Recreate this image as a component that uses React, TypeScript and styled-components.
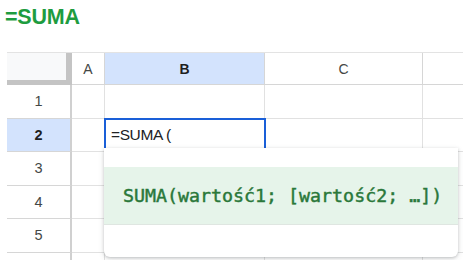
import styled, { createGlobalStyle } from 'styled-components'

const GlobalStyle = createGlobalStyle`
    body {
        margin: 0;
        background: #ffffff;
        font-family: Arial, "Liberation Sans", sans-serif;
        overflow: hidden;
    }
`

const Page = styled.div`
    position: relative;
    width: 463px;
    height: 260px;
    overflow: hidden;
`

const Title = styled.div`
    padding: 5px 0 0 5px;
    height: 52px;
    box-sizing: border-box;
    font-family: "Liberation Sans", Arial, sans-serif;
    font-weight: 700;
    font-size: 21.5px;
    color: #1e9c3f;
    letter-spacing: -0.2px;
`

const Sheet = styled.div`
    display: grid;
    grid-template-columns: 65px 33px 160px 158px 60px;
    grid-template-rows: 32px repeat(6, 33.5px);
    margin-left: 7px;
    border-top: 1px solid #e3e3e3;
`

type cellType = {
    active?: boolean;
    selected?: boolean;
}

const Cell = styled.div<cellType>`
    box-sizing: border-box;
    border-right: 1px solid #e1e1e1;
    border-bottom: 1px solid #e1e1e1;
    background: #ffffff;
    font-size: 15.5px;
    color: #202124;
    display: flex;
    align-items: center;
    padding-left: 6px;
    outline: ${(p) => (p.selected ? '2px solid #1a5fd8' : 'none')};
    outline-offset: -1px;
    position: relative;
    z-index: ${(p) => (p.selected ? 1 : 0)};
    letter-spacing: -0.4px;
`

const HeadCell = styled.div<cellType>`
    box-sizing: border-box;
    display: flex;
    align-items: center;
    justify-content: center;
    font-family: "Liberation Sans", Arial, sans-serif;
    font-size: 14px;
    font-weight: ${(p) => (p.active ? 700 : 400)};
    color: ${(p) => (p.active ? '#1f1f1f' : '#444746')};
    background: ${(p) => (p.active ? '#d3e3fd' : '#ffffff')};
    border-right: 1px solid #d6d6d6;
    border-bottom: 1px solid #d6d6d6;
`

const Corner = styled.div`
    box-sizing: border-box;
    background: #f8f9fa;
    border-right: 6px solid #c4c4c4;
    border-bottom: 5px solid #c4c4c4;
`

const RowHead = styled(HeadCell)`
    border-right: 2px solid #d0d0d0;
    font-size: 14.5px;
`

const Popup = styled.div`
    position: absolute;
    left: 104px;
    top: 148px;
    width: 354px;
    height: 109px;
    background: #ffffff;
    border-radius: 0 0 6px 6px;
    box-shadow: 0 1px 3px rgba(60, 64, 67, 0.25), 0 2px 6px rgba(60, 64, 67, 0.12);
    z-index: 5;
    padding-top: 19px;
    box-sizing: border-box;
`

const Signature = styled.div`
    height: 57px;
    background: #e6f4ea;
    border-bottom: 1px solid #dfe6e1;
    display: flex;
    align-items: center;
    padding-left: 19px;
    font-family: "DejaVu Sans Mono", "Liberation Mono", monospace;
    font-size: 18.3px;
    color: #2a783a;
    -webkit-text-stroke: 0.45px #2a783a;
    white-space: nowrap;
`

const columns = ['A', 'B', 'C', '']
const rows = [1, 2, 3, 4, 5, 6]

const App = () => {
    return (
        <Page>
            <GlobalStyle />
            <Title>=SUMA</Title>
            <Sheet>
                <Corner />
                {columns.map((c) => (
                    <HeadCell key={c || 'D'} active={c === 'B'}>{c}</HeadCell>
                ))}
                {rows.map((r) => [
                    <RowHead key={'h' + r} active={r === 2}>{r < 6 ? r : ''}</RowHead>,
                    ...columns.map((c) => (
                        <Cell key={c + r} selected={r === 2 && c === 'B'}>
                            {r === 2 && c === 'B' ? '=SUMA (' : ''}
                        </Cell>
                    )),
                ])}
            </Sheet>
            <Popup>
                <Signature>SUMA(wartość1; [wartość2; …])</Signature>
            </Popup>
        </Page>
    )
}

export default App
